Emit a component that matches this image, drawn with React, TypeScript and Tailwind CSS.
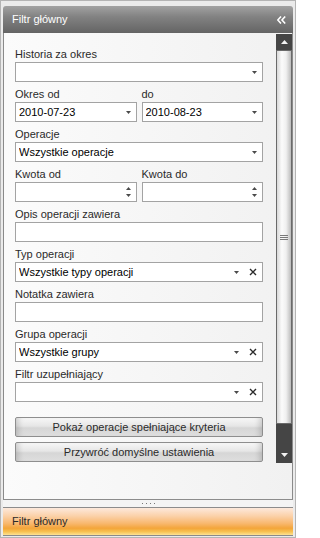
import React from 'react';

function Arrow() {
  return (
    <svg width="5" height="3" viewBox="0 0 5 3" className="shrink-0">
      <path d="M0 0h5L2.5 3z" fill="#4a4a4a" />
    </svg>
  );
}

function Clear() {
  return (
    <svg width="8" height="8" viewBox="0 0 8 8" className="shrink-0">
      <path d="M1 1l6 6M7 1L1 7" stroke="#2b2b2b" strokeWidth="1.4" />
    </svg>
  );
}

function Spin() {
  return (
    <div className="flex flex-col items-center gap-[4px]">
      <svg width="5" height="3" viewBox="0 0 5 3">
        <path d="M0 3h5L2.5 0z" fill="#4a4a4a" />
      </svg>
      <svg width="5" height="3" viewBox="0 0 5 3">
        <path d="M0 0h5L2.5 3z" fill="#4a4a4a" />
      </svg>
    </div>
  );
}

function Label({ children }: { children: React.ReactNode }) {
  return <div className="h-5 pt-[4px] leading-[16px] text-[#2a2a2a] whitespace-nowrap">{children}</div>;
}

type FieldProps = {
  value?: string;
  kind?: 'text' | 'select' | 'clear' | 'spin';
};

function Field({ value = '', kind = 'text' }: FieldProps) {
  return (
    <div className="flex h-5 items-center border border-[#a3a3a3] bg-white pl-[3px] pr-[5px] text-black">
      <span className="flex-1 truncate leading-[18px]">{value}</span>
      {kind === 'select' && <Arrow />}
      {kind === 'spin' && <Spin />}
      {kind === 'clear' && (
        <div className="flex items-center gap-[10px]">
          <Arrow />
          <Clear />
        </div>
      )}
    </div>
  );
}

function Button({ children }: { children: React.ReactNode }) {
  return (
    <div className="flex h-5 items-center justify-center rounded-[2px] border border-[#8e8e8e] bg-[linear-gradient(180deg,#f7f7f7_0%,#e6e6e6_45%,#d6d6d6_55%,#dedede_100%)] text-[#2a2a2a] shadow-[inset_7px_0_6px_-5px_rgba(0,0,0,0.18),inset_-7px_0_6px_-5px_rgba(0,0,0,0.18)]">
      {children}
    </div>
  );
}

function Scrollbar() {
  return (
    <div className="mt-[1px] flex h-[429px] w-[16px] flex-col bg-[#454545]">
      <div className="flex h-4 items-center justify-center">
        <svg width="7" height="4" viewBox="0 0 7 4">
          <path d="M0 4h7L3.5 0z" fill="#f2f2f2" />
        </svg>
      </div>
      <div className="flex h-[374px] items-center justify-center border border-[#6a6a6a] bg-[linear-gradient(90deg,#d9d9d9_0%,#fbfbfb_35%,#efefef_65%,#bcbcbc_100%)]">
        <div className="flex flex-col gap-[1px]">
          <div className="h-px w-[8px] bg-[#7a7a7a]" />
          <div className="h-px w-[8px] bg-[#7a7a7a]" />
          <div className="h-px w-[8px] bg-[#7a7a7a]" />
        </div>
      </div>
      <div className="flex-1" />
      <div className="flex h-4 items-center justify-center">
        <svg width="7" height="4" viewBox="0 0 7 4">
          <path d="M0 0h7L3.5 4z" fill="#f2f2f2" />
        </svg>
      </div>
    </div>
  );
}

export default function App() {
  return (
    <div className="h-[538px] w-[296px] overflow-hidden border border-[#b4b4b4] bg-[#ebebeb] px-[2px] pt-[5px] pb-px font-['Liberation_Sans',Arial,sans-serif] text-[11px]">
      <div className="flex h-full flex-col">
        {/* header */}
        <div className="flex h-[27px] items-center justify-between rounded-t-[3px] bg-[linear-gradient(180deg,#a2a2a2_0%,#828282_40%,#646464_100%)] pl-[9px] pr-[7px] text-[11px] text-white">
          <span>Filtr główny</span>
          <svg width="9" height="8" viewBox="0 0 9 8">
            <path d="M4 0.5L0.8 4L4 7.5M8.2 0.5L5 4L8.2 7.5" stroke="#ffffff" strokeWidth="1.6" fill="none" />
          </svg>
        </div>

        {/* body */}
        <div className="flex h-[466px] justify-between border-x border-[#8a8a8a] bg-[linear-gradient(90deg,#fbfbfb_0%,#f1f1f1_100%)]">
          <div className="w-[259px] pl-[11px] pt-[9px]">
            <Label>Historia za okres</Label>
            <Field kind="select" />
            <div className="grid grid-cols-2 gap-x-[5px]">
              <div>
                <Label>Okres od</Label>
                <Field kind="select" value="2010-07-23" />
              </div>
              <div>
                <Label>do</Label>
                <Field kind="select" value="2010-08-23" />
              </div>
            </div>
            <Label>Operacje</Label>
            <Field kind="select" value="Wszystkie operacje" />
            <div className="grid grid-cols-2 gap-x-[5px]">
              <div>
                <Label>Kwota od</Label>
                <Field kind="spin" />
              </div>
              <div>
                <Label>Kwota do</Label>
                <Field kind="spin" />
              </div>
            </div>
            <Label>Opis operacji zawiera</Label>
            <Field />
            <Label>Typ operacji</Label>
            <Field kind="clear" value="Wszystkie typy operacji" />
            <Label>Notatka zawiera</Label>
            <Field />
            <Label>Grupa operacji</Label>
            <Field kind="clear" value="Wszystkie grupy" />
            <Label>Filtr uzupełniający</Label>
            <Field kind="clear" />
            <div className="mt-[15px] flex flex-col gap-[5px]">
              <Button>Pokaż operacje spełniające kryteria</Button>
              <Button>Przywróć domyślne ustawienia</Button>
            </div>
          </div>
          <Scrollbar />
        </div>

        {/* splitter */}
        <div className="flex h-[9px] items-center justify-center gap-[1px] border-y border-[#8c8c8c] bg-[#f4f4f4]">
          <div className="h-px w-px bg-[#777]" />
          <div className="h-px w-px bg-transparent" />
          <div className="h-px w-px bg-[#777]" />
          <div className="h-px w-px bg-transparent" />
          <div className="h-px w-px bg-[#777]" />
          <div className="h-px w-px bg-transparent" />
          <div className="h-px w-px bg-[#777]" />
        </div>

        {/* collapsed group bar */}
        <div className="flex h-[28px] items-center border-b border-[#8a8a8a] bg-[linear-gradient(180deg,#fde9dc_0%,#fbd1a8_30%,#f8b76c_58%,#f3a53a_75%,#f7c251_88%,#fde294_100%)] pl-[9px] text-[#2a2a2a]">
          Filtr główny
        </div>
      </div>
    </div>
  );
}
